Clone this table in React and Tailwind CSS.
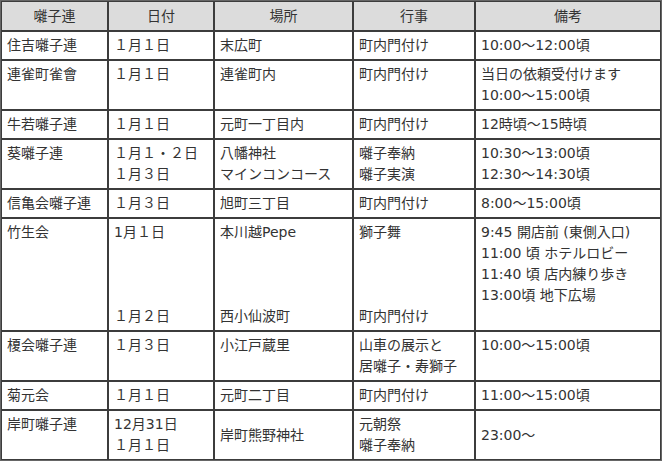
import React from "react";

const rows = [
  {
    name: ["住吉囃子連"],
    date: ["１月１日"],
    place: ["末広町"],
    event: ["町内門付け"],
    note: ["10:00～12:00頃"],
  },
  {
    name: ["連雀町雀會"],
    date: ["１月１日"],
    place: ["連雀町内"],
    event: ["町内門付け"],
    note: ["当日の依頼受付けます", "10:00～15:00頃"],
  },
  {
    name: ["牛若囃子連"],
    date: ["１月１日"],
    place: ["元町一丁目内"],
    event: ["町内門付け"],
    note: ["12時頃～15時頃"],
  },
  {
    name: ["葵囃子連"],
    date: ["１月１・２日", "１月３日"],
    place: ["八幡神社", "マインコンコース"],
    event: ["囃子奉納", "囃子実演"],
    note: ["10:30～13:00頃", "12:30～14:30頃"],
  },
  {
    name: ["信亀会囃子連"],
    date: ["１月３日"],
    place: ["旭町三丁目"],
    event: ["町内門付け"],
    note: ["8:00～15:00頃"],
  },
  {
    name: ["竹生会"],
    date: ["1月１日", "", "", "", "１月２日"],
    place: ["本川越Pepe", "", "", "", "西小仙波町"],
    event: ["獅子舞", "", "", "", "町内門付け"],
    note: ["9:45 開店前 (東側入口)", "11:00 頃 ホテルロビー", "11:40 頃 店内練り歩き", "13:00頃 地下広場"],
  },
  {
    name: ["榎会囃子連"],
    date: ["１月３日"],
    place: ["小江戸蔵里"],
    event: ["山車の展示と", "居囃子・寿獅子"],
    note: ["10:00～15:00頃"],
  },
  {
    name: ["菊元会"],
    date: ["１月１日"],
    place: ["元町二丁目"],
    event: ["町内門付け"],
    note: ["11:00～15:00頃"],
  },
  {
    name: ["岸町囃子連"],
    date: ["12月31日", "１月１日"],
    place: ["岸町熊野神社"],
    event: ["元朝祭", "囃子奉納"],
    note: ["23:00～"],
    middle: true,
  },
];

function Lines({ lines }) {
  return lines.map((l, i) => (
    <div key={i} className="h-[21px] whitespace-nowrap">
      {l}
    </div>
  ));
}

export default function App() {
  const td = "border border-[#3c3c3c] px-[5px] py-[3px] align-top";
  const th = "border border-[#3c3c3c] bg-[#dcdcdc] px-[5px] py-[3.5px] font-normal text-center align-middle";
  return (
    <div className="w-[662px] h-[462px] bg-white font-['DejaVu_Sans','Noto_Sans_CJK_JP',sans-serif] text-[14px] leading-[21px] text-[#333]">
      <table className="table-fixed border-separate border-spacing-0 border border-[#666] w-[662px]">
        <colgroup>
          <col className="w-[107px]" />
          <col className="w-[106px]" />
          <col className="w-[139px]" />
          <col className="w-[122px]" />
          <col className="w-[186px]" />
        </colgroup>
        <thead>
          <tr>
            <th className={th}>囃子連</th>
            <th className={th}>日付</th>
            <th className={th}>場所</th>
            <th className={th}>行事</th>
            <th className={th}>備考</th>
          </tr>
        </thead>
        <tbody>
          {rows.map((r, i) => (
            <tr key={i}>
              <td className={td}>
                <Lines lines={r.name} />
              </td>
              <td className={td}>
                <Lines lines={r.date} />
              </td>
              <td className={r.middle ? "border border-[#3c3c3c] px-[5px] py-[3px] align-middle" : td}>
                <Lines lines={r.place} />
              </td>
              <td className={td}>
                <Lines lines={r.event} />
              </td>
              <td className={r.middle ? "border border-[#3c3c3c] px-[5px] py-[3px] align-middle" : td}>
                <Lines lines={r.note} />
              </td>
            </tr>
          ))}
        </tbody>
      </table>
    </div>
  );
}
